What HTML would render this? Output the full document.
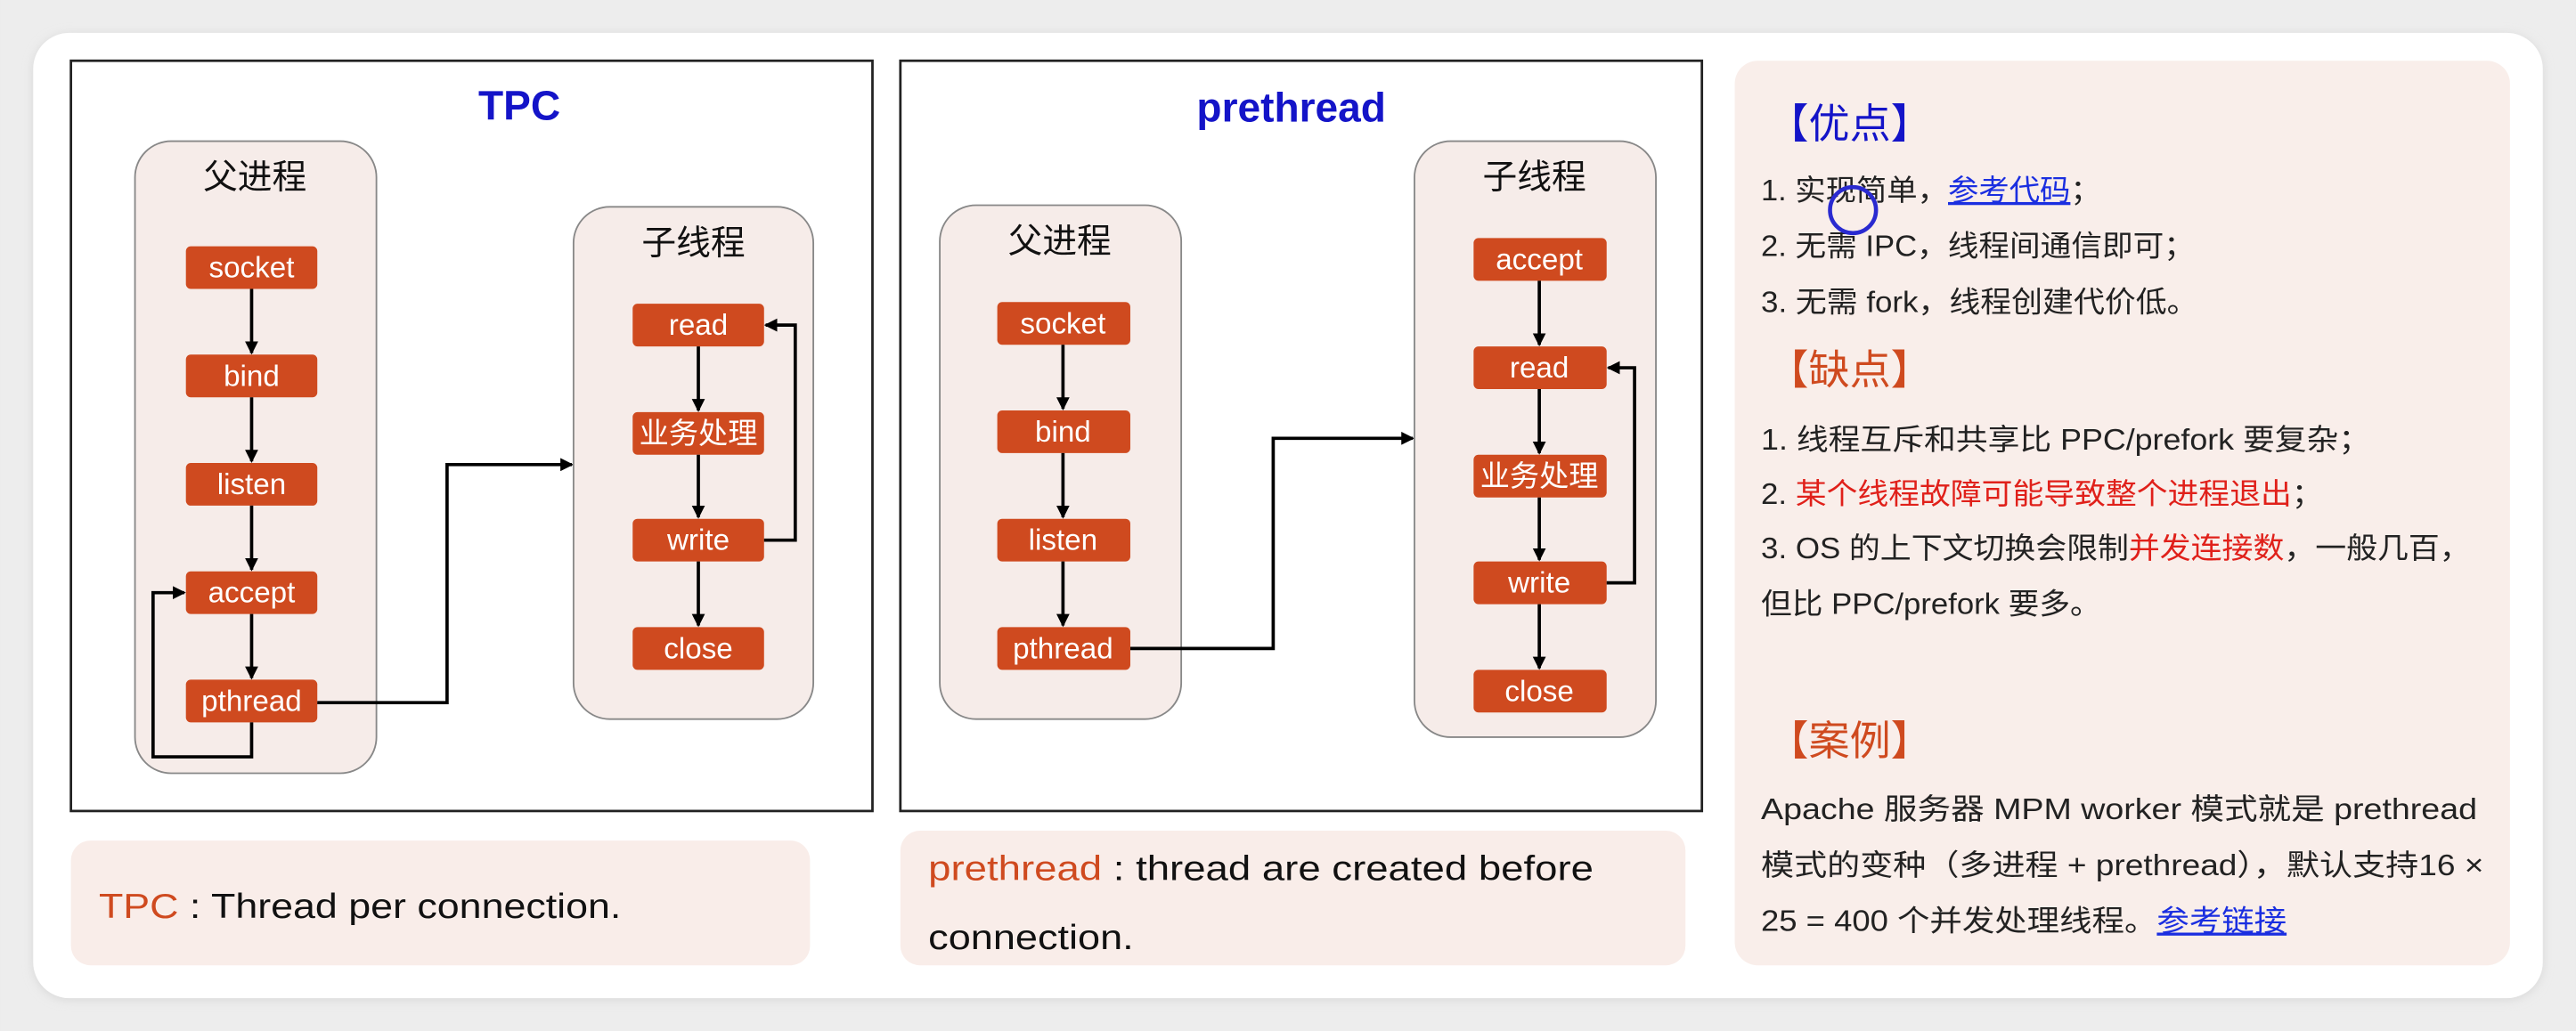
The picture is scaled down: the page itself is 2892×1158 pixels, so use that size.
<!DOCTYPE html>
<html><head><meta charset="utf-8"><style>
html,body{margin:0;padding:0;background:#ececec;}
svg{display:block;}
text{font-family:"Liberation Sans","Noto Sans CJK SC",sans-serif;}
</style></head><body>
<svg width="2892" height="1158" viewBox="0 0 1568 628" xmlns="http://www.w3.org/2000/svg">
<defs>
<marker id="ah" markerWidth="8" markerHeight="8" refX="7" refY="4" orient="auto" markerUnits="userSpaceOnUse"><path d="M0,0 L8,4 L0,8 z" fill="#000"/></marker>
<filter id="sh" x="-5%" y="-5%" width="110%" height="110%"><feGaussianBlur stdDeviation="3"/></filter>
</defs>
<rect x="0" y="0" width="1568" height="628" fill="#ededed"/>
<rect x="20" y="21" width="1528" height="588" rx="22" fill="#d8d8d8" filter="url(#sh)"/>
<rect x="20" y="20" width="1528" height="588" rx="22" fill="#fff"/>

<!-- TPC panel -->
<rect x="43" y="37" width="488" height="457" fill="#fff" stroke="#222" stroke-width="1.5"/>
<text x="316" y="73" font-size="25" font-weight="bold" fill="#1414c8" text-anchor="middle">TPC</text>
<rect x="82" y="86" width="147" height="385" rx="22" fill="#f6ece9" stroke="#888" stroke-width="1"/>
<text x="155" y="115" font-size="21" text-anchor="middle" fill="#111">父进程</text>
<g fill="#cf4a1f">
<rect x="113" y="150" width="80" height="26" rx="3"/><rect x="113" y="216" width="80" height="26" rx="3"/><rect x="113" y="282" width="80" height="26" rx="3"/><rect x="113" y="348" width="80" height="26" rx="3"/><rect x="113" y="414" width="80" height="26" rx="3"/>
</g>
<g font-size="18" fill="#fff" text-anchor="middle">
<text x="153" y="169">socket</text><text x="153" y="235">bind</text><text x="153" y="301">listen</text><text x="153" y="367">accept</text><text x="153" y="433">pthread</text>
</g>
<g stroke="#000" stroke-width="2" fill="none" marker-end="url(#ah)">
<line x1="153" y1="176" x2="153" y2="215"/><line x1="153" y1="242" x2="153" y2="281"/><line x1="153" y1="308" x2="153" y2="347"/><line x1="153" y1="374" x2="153" y2="413"/>
<polyline points="153,440 153,461 93,461 93,361 112,361"/>
<polyline points="193,428 272,428 272,283 348,283"/>
</g>
<rect x="349" y="126" width="146" height="312" rx="22" fill="#f6ece9" stroke="#888" stroke-width="1"/>
<text x="422" y="155" font-size="21" text-anchor="middle" fill="#111">子线程</text>
<g fill="#cf4a1f">
<rect x="385" y="185" width="80" height="26" rx="3"/><rect x="385" y="251" width="80" height="26" rx="3"/><rect x="385" y="316" width="80" height="26" rx="3"/><rect x="385" y="382" width="80" height="26" rx="3"/>
</g>
<g font-size="18" fill="#fff" text-anchor="middle">
<text x="425" y="204">read</text><text x="425" y="270">业务处理</text><text x="425" y="335">write</text><text x="425" y="401">close</text>
</g>
<g stroke="#000" stroke-width="2" fill="none" marker-end="url(#ah)">
<line x1="425" y1="211" x2="425" y2="250"/><line x1="425" y1="277" x2="425" y2="315"/><line x1="425" y1="342" x2="425" y2="381"/>
<polyline points="465,329 484,329 484,198 466,198"/>
</g>
<rect x="43" y="512" width="450" height="76" rx="12" fill="#f9ede9"/>
<text x="60" y="559" font-size="21" fill="#111" textLength="318" lengthAdjust="spacingAndGlyphs"><tspan fill="#cf4a1f">TPC</tspan> : Thread per connection.</text>

<!-- prethread panel -->
<rect x="548" y="37" width="488" height="457" fill="#fff" stroke="#222" stroke-width="1.5"/>
<text x="786" y="74" font-size="25" font-weight="bold" fill="#1414c8" text-anchor="middle">prethread</text>
<rect x="572" y="125" width="147" height="313" rx="22" fill="#f6ece9" stroke="#888" stroke-width="1"/>
<text x="645" y="154" font-size="21" text-anchor="middle" fill="#111">父进程</text>
<g fill="#cf4a1f">
<rect x="607" y="184" width="81" height="26" rx="3"/><rect x="607" y="250" width="81" height="26" rx="3"/><rect x="607" y="316" width="81" height="26" rx="3"/><rect x="607" y="382" width="81" height="26" rx="3"/>
</g>
<g font-size="18" fill="#fff" text-anchor="middle">
<text x="647" y="203">socket</text><text x="647" y="269">bind</text><text x="647" y="335">listen</text><text x="647" y="401">pthread</text>
</g>
<g stroke="#000" stroke-width="2" fill="none" marker-end="url(#ah)">
<line x1="647" y1="210" x2="647" y2="249"/><line x1="647" y1="276" x2="647" y2="315"/><line x1="647" y1="342" x2="647" y2="381"/>
<polyline points="688,395 775,395 775,267 860,267"/>
</g>
<rect x="861" y="86" width="147" height="363" rx="22" fill="#f6ece9" stroke="#888" stroke-width="1"/>
<text x="934" y="115" font-size="21" text-anchor="middle" fill="#111">子线程</text>
<g fill="#cf4a1f">
<rect x="897" y="145" width="81" height="26" rx="3"/><rect x="897" y="211" width="81" height="26" rx="3"/><rect x="897" y="277" width="81" height="26" rx="3"/><rect x="897" y="342" width="81" height="26" rx="3"/><rect x="897" y="408" width="81" height="26" rx="3"/>
</g>
<g font-size="18" fill="#fff" text-anchor="middle">
<text x="937" y="164">accept</text><text x="937" y="230">read</text><text x="937" y="296">业务处理</text><text x="937" y="361">write</text><text x="937" y="427">close</text>
</g>
<g stroke="#000" stroke-width="2" fill="none" marker-end="url(#ah)">
<line x1="937" y1="171" x2="937" y2="210"/><line x1="937" y1="237" x2="937" y2="276"/><line x1="937" y1="303" x2="937" y2="341"/><line x1="937" y1="368" x2="937" y2="407"/>
<polyline points="978,355 995,355 995,224 979,224"/>
</g>
<rect x="548" y="506" width="478" height="82" rx="12" fill="#f9ede9"/>
<text x="565" y="536" font-size="21" fill="#111" textLength="405" lengthAdjust="spacingAndGlyphs"><tspan fill="#cf4a1f">prethread</tspan> : thread are created before</text>
<text x="565" y="578" font-size="21" fill="#111" textLength="125" lengthAdjust="spacingAndGlyphs">connection.</text>

<!-- right panel -->
<rect x="1056" y="37" width="472" height="551" rx="14" fill="#f9eeea"/>
<g font-size="18" fill="#222">
<text x="1076" y="84" font-size="25" fill="#1414c8">【优点】</text>
<text x="1072" y="122" textLength="207" lengthAdjust="spacingAndGlyphs">1. 实现简单，<tspan fill="#1a2ee0" text-decoration="underline">参考代码</tspan>；</text>
<text x="1072" y="156" textLength="264" lengthAdjust="spacingAndGlyphs">2. 无需 IPC，线程间通信即可；</text>
<text x="1072" y="190" textLength="266" lengthAdjust="spacingAndGlyphs">3. 无需 fork，线程创建代价低。</text>
<text x="1076" y="234" font-size="25" fill="#cf4a1f">【缺点】</text>
<text x="1072" y="274" textLength="371" lengthAdjust="spacingAndGlyphs">1. 线程互斥和共享比 PPC/prefork 要复杂；</text>
<text x="1072" y="307" textLength="342" lengthAdjust="spacingAndGlyphs">2. <tspan fill="#e0201a">某个线程故障可能导致整个进程退出</tspan>；</text>
<text x="1072" y="340" textLength="432" lengthAdjust="spacingAndGlyphs">3. OS 的上下文切换会限制<tspan fill="#e0201a">并发连接数</tspan>，一般几百，</text>
<text x="1072" y="374" textLength="207" lengthAdjust="spacingAndGlyphs">但比 PPC/prefork 要多。</text>
<text x="1076" y="460" font-size="25" fill="#cf4a1f">【案例】</text>
<text x="1072" y="499" textLength="436" lengthAdjust="spacingAndGlyphs">Apache 服务器 MPM worker 模式就是 prethread</text>
<text x="1072" y="533" textLength="440" lengthAdjust="spacingAndGlyphs">模式的变种（多进程 + prethread），默认支持16 ×</text>
<text x="1072" y="567" textLength="320" lengthAdjust="spacingAndGlyphs">25 = 400 个并发处理线程。<tspan fill="#1a2ee0" text-decoration="underline">参考链接</tspan></text>
</g>
<circle cx="1128" cy="128" r="14" fill="none" stroke="#2a2ad0" stroke-width="2.5"/>
</svg>
</body></html>
